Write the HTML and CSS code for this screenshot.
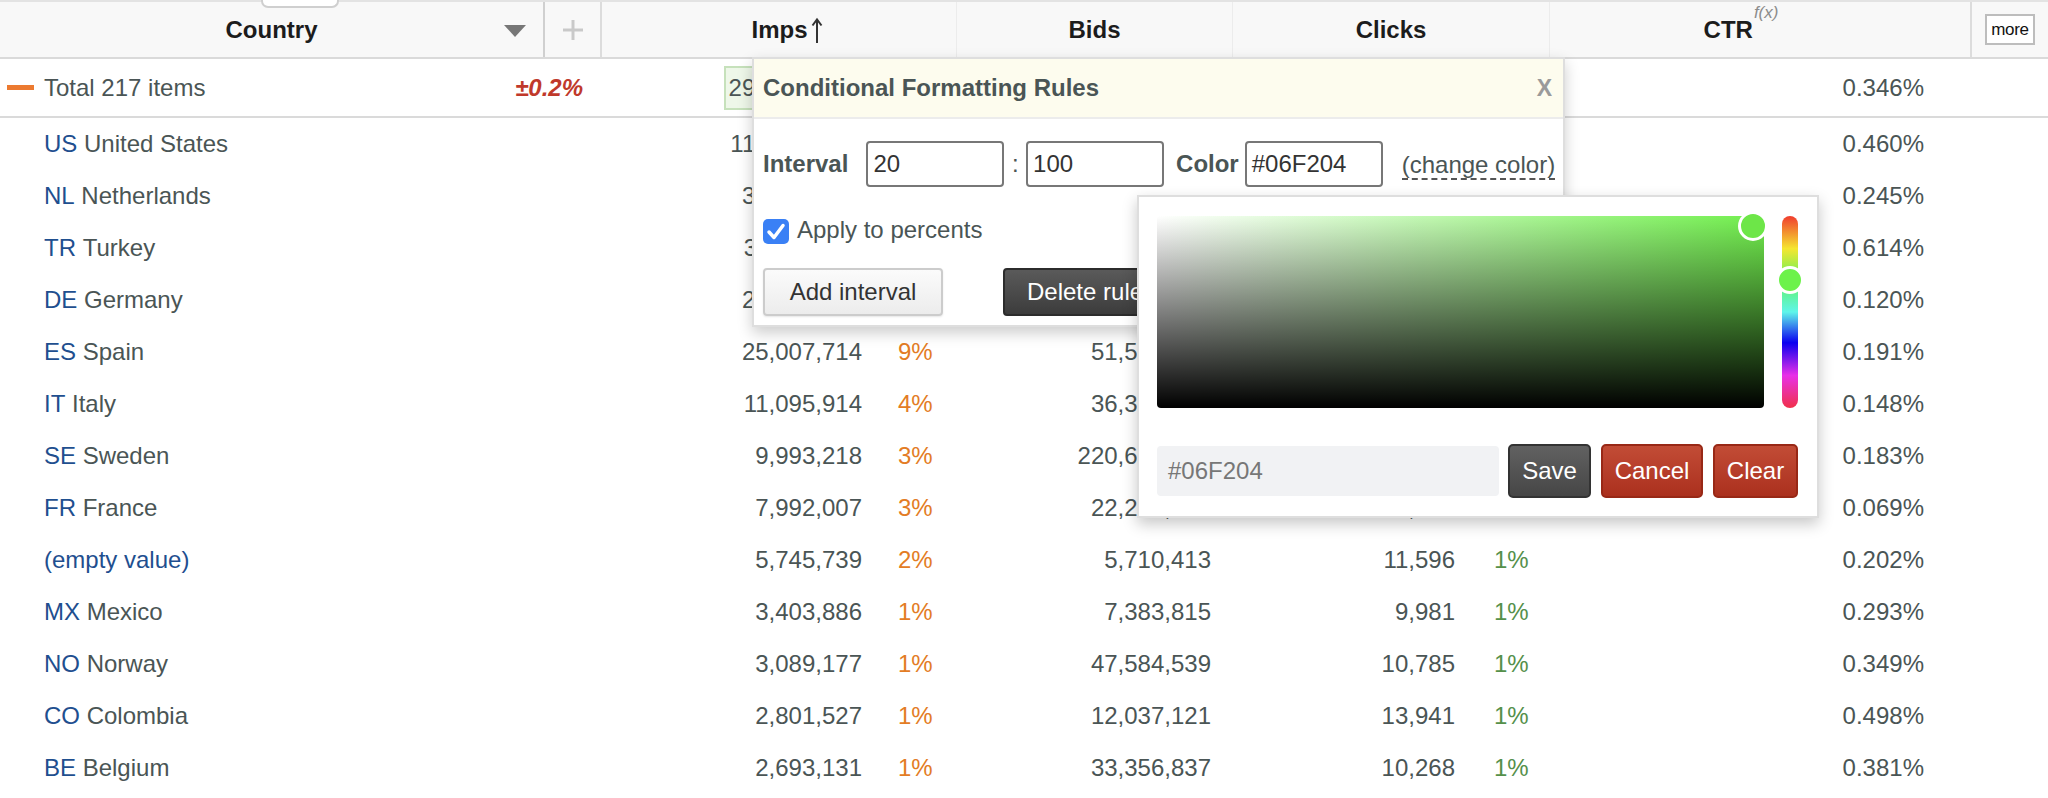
FILE: index.html
```html
<!DOCTYPE html>
<html>
<head>
<meta charset="utf-8">
<title>Report</title>
<link rel="stylesheet" href="styles.css">
</head>
<body>
<div class="tab"></div>
<div class="grid">
  <div class="hrow">
    <div class="hc hc-country"><span></span><span>Country</span><span class="tri"></span></div>
    <div class="hc hc-plus"><svg width="22" height="22" viewBox="0 0 22 22"><path d="M11 1V21M1 11H21" stroke="#c9c9c9" stroke-width="3" fill="none"/></svg></div>
    <div class="hc hc-imps">Imps<svg class="arrow" width="12" height="27" viewBox="0 0 12 27"><path d="M6 3V26M1.5 8.5L6 2.5L10.5 8.5" stroke="#333" stroke-width="2" fill="none"/></svg></div>
    <div class="hc">Bids</div>
    <div class="hc">Clicks</div>
    <div class="hc hc-ctr">CTR<span class="fx">f(x)</span></div>
    <div class="hc hc-more"><span class="more">more</span></div>
  </div>

  <div class="row total">
    <div class="c-country"><span class="dash"></span>Total 217 items<span class="dev">±0.2%</span></div>
    <div class="c-imps"><span class="num"><span class="box">291,764,355</span></span></div>
    <div class="c-bids">1,046,385,442</div>
    <div class="c-clicks"><span class="num">1,009,817</span></div>
    <div class="c-ctr">0.346%</div>
    <div></div>
  </div>

  <div class="row">
    <div class="c-country"><span class="code">US</span>&nbsp;United States</div>
    <div class="c-imps"><span class="num">118,437,205</span><span class="pct orange">41%</span></div>
    <div class="c-bids">403,559,218</div>
    <div class="c-clicks"><span class="num">544,812</span><span class="pct green">54%</span></div>
    <div class="c-ctr">0.460%</div>
    <div></div>
  </div>
  <div class="row">
    <div class="c-country"><span class="code">NL</span>&nbsp;Netherlands</div>
    <div class="c-imps"><span class="num">35,912,604</span><span class="pct orange">12%</span></div>
    <div class="c-bids">97,305,441</div>
    <div class="c-clicks"><span class="num">87,984</span><span class="pct green">9%</span></div>
    <div class="c-ctr">0.245%</div>
    <div></div>
  </div>
  <div class="row">
    <div class="c-country"><span class="code">TR</span>&nbsp;Turkey</div>
    <div class="c-imps"><span class="num">33,480,119</span><span class="pct orange">11%</span></div>
    <div class="c-bids">58,210,667</div>
    <div class="c-clicks"><span class="num">205,568</span><span class="pct green">20%</span></div>
    <div class="c-ctr">0.614%</div>
    <div></div>
  </div>
  <div class="row">
    <div class="c-country"><span class="code">DE</span>&nbsp;Germany</div>
    <div class="c-imps"><span class="num">28,764,032</span><span class="pct orange">10%</span></div>
    <div class="c-bids">71,029,385</div>
    <div class="c-clicks"><span class="num">34,517</span><span class="pct green">3%</span></div>
    <div class="c-ctr">0.120%</div>
    <div></div>
  </div>
  <div class="row">
    <div class="c-country"><span class="code">ES</span>&nbsp;Spain</div>
    <div class="c-imps"><span class="num">25,007,714</span><span class="pct orange">9%</span></div>
    <div class="c-bids">51,528,406</div>
    <div class="c-clicks"><span class="num">47,765</span><span class="pct green">5%</span></div>
    <div class="c-ctr">0.191%</div>
    <div></div>
  </div>
  <div class="row">
    <div class="c-country"><span class="code">IT</span>&nbsp;Italy</div>
    <div class="c-imps"><span class="num">11,095,914</span><span class="pct orange">4%</span></div>
    <div class="c-bids">36,347,918</div>
    <div class="c-clicks"><span class="num">16,422</span><span class="pct green">2%</span></div>
    <div class="c-ctr">0.148%</div>
    <div></div>
  </div>
  <div class="row">
    <div class="c-country"><span class="code">SE</span>&nbsp;Sweden</div>
    <div class="c-imps"><span class="num">9,993,218</span><span class="pct orange">3%</span></div>
    <div class="c-bids">220,641,073</div>
    <div class="c-clicks"><span class="num">18,288</span><span class="pct green">2%</span></div>
    <div class="c-ctr">0.183%</div>
    <div></div>
  </div>
  <div class="row">
    <div class="c-country"><span class="code">FR</span>&nbsp;France</div>
    <div class="c-imps"><span class="num">7,992,007</span><span class="pct orange">3%</span></div>
    <div class="c-bids">22,219,654</div>
    <div class="c-clicks"><span class="num">5,515</span><span class="pct green">1%</span></div>
    <div class="c-ctr">0.069%</div>
    <div></div>
  </div>
  <div class="row">
    <div class="c-country"><span class="code">(empty value)</span></div>
    <div class="c-imps"><span class="num">5,745,739</span><span class="pct orange">2%</span></div>
    <div class="c-bids">5,710,413</div>
    <div class="c-clicks"><span class="num">11,596</span><span class="pct green">1%</span></div>
    <div class="c-ctr">0.202%</div>
    <div></div>
  </div>
  <div class="row">
    <div class="c-country"><span class="code">MX</span>&nbsp;Mexico</div>
    <div class="c-imps"><span class="num">3,403,886</span><span class="pct orange">1%</span></div>
    <div class="c-bids">7,383,815</div>
    <div class="c-clicks"><span class="num">9,981</span><span class="pct green">1%</span></div>
    <div class="c-ctr">0.293%</div>
    <div></div>
  </div>
  <div class="row">
    <div class="c-country"><span class="code">NO</span>&nbsp;Norway</div>
    <div class="c-imps"><span class="num">3,089,177</span><span class="pct orange">1%</span></div>
    <div class="c-bids">47,584,539</div>
    <div class="c-clicks"><span class="num">10,785</span><span class="pct green">1%</span></div>
    <div class="c-ctr">0.349%</div>
    <div></div>
  </div>
  <div class="row">
    <div class="c-country"><span class="code">CO</span>&nbsp;Colombia</div>
    <div class="c-imps"><span class="num">2,801,527</span><span class="pct orange">1%</span></div>
    <div class="c-bids">12,037,121</div>
    <div class="c-clicks"><span class="num">13,941</span><span class="pct green">1%</span></div>
    <div class="c-ctr">0.498%</div>
    <div></div>
  </div>
  <div class="row">
    <div class="c-country"><span class="code">BE</span>&nbsp;Belgium</div>
    <div class="c-imps"><span class="num">2,693,131</span><span class="pct orange">1%</span></div>
    <div class="c-bids">33,356,837</div>
    <div class="c-clicks"><span class="num">10,268</span><span class="pct green">1%</span></div>
    <div class="c-ctr">0.381%</div>
    <div></div>
  </div>
</div>

<div class="cf">
  <div class="cf-head">Conditional Formatting Rules<span class="close">X</span></div>
  <div class="cf-body">
    <div class="cf-line">
      <span class="lbl lbl-interval">Interval</span>
      <span class="inp">20</span>
      <span class="colon">:</span>
      <span class="inp">100</span>
      <span class="lbl lbl-color">Color</span>
      <span class="inp">#06F204</span>
      <span class="change">(change color)</span>
    </div>
    <div class="cf-check">
      <span class="cb"><svg width="26" height="25" viewBox="0 0 26 25"><path d="M6 13L11 18.5L20 6.5" stroke="#fff" stroke-width="3.5" fill="none" stroke-linecap="round" stroke-linejoin="round"/></svg></span>
      <span>Apply to percents</span>
    </div>
    <div class="cf-btns">
      <span class="btn btn-light">Add interval</span>
      <span class="btn btn-dark">Delete rule</span>
    </div>
  </div>
</div>

<div class="picker">
  <div class="pk-top">
    <div class="sat"><span class="sat-h"></span></div>
    <div class="hue"><span class="hue-h"></span></div>
  </div>
  <div class="pk-bottom">
    <span class="hex">#06F204</span>
    <span class="pbtn pbtn-save">Save</span>
    <span class="pbtn pbtn-red pbtn-cancel">Cancel</span>
    <span class="pbtn pbtn-red pbtn-clear">Clear</span>
  </div>
</div>
</body>
</html>
```

FILE: styles.css
```css
* { box-sizing: border-box; }
html, body { margin: 0; padding: 0; }
body {
  width: 2048px;
  height: 798px;
  overflow: hidden;
  position: relative;
  background: #fff;
  font-family: "Liberation Sans", Arial, sans-serif;
  font-size: 24px;
  color: #4a5555;
}

.tab {
  position: absolute;
  left: 261px;
  top: 0;
  width: 78px;
  height: 8px;
  background: #fff;
  border: 2px solid #cfcfcf;
  border-top: none;
  border-radius: 0 0 7px 7px;
  z-index: 2;
}

.grid { display: flex; flex-direction: column; }

.hrow, .row {
  display: grid;
  grid-template-columns: 543px 57px 356px 276px 317px 421px 78px;
}

.hrow {
  height: 59px;
  background: #f8f8f8;
  border-top: 2px solid #e3e3e3;
  border-bottom: 2px solid #dadada;
  color: #1c1c1c;
  font-weight: bold;
}
.hc {
  display: flex;
  align-items: center;
  justify-content: center;
  border-left: 1px solid #ececec;
}
.hc-country {
  border-left: none;
  display: grid;
  grid-template-columns: 1fr auto 1fr;
  align-items: center;
}
.tri {
  justify-self: end;
  margin-right: 17px;
  margin-top: 2px;
  width: 0;
  height: 0;
  border-left: 11.5px solid transparent;
  border-right: 11.5px solid transparent;
  border-top: 12px solid #777;
}
.hc-plus { border-left: 2px solid #d0d0d0; }
.hc-imps { border-left: 2px solid #dcdcdc; padding-left: 16px; }
.arrow { margin-left: 3px; margin-top: 2px; }
.hc-ctr { padding-right: 38px; }
.fx {
  font-weight: normal;
  font-style: italic;
  font-size: 17px;
  color: #8c8c8c;
  align-self: flex-start;
  margin-top: 1px;
  margin-left: 1px;
}
.hc-more { border-left: 2px solid #dcdcdc; }
.more {
  display: flex;
  align-items: center;
  height: 31px;
  padding: 0 4px;
  border: 2px solid #bdbdbd;
  background: #fff;
  font-weight: normal;
  font-size: 17px;
  color: #111;
  letter-spacing: -0.3px;
}

.row { height: 52px; align-items: center; }
.total { height: 59px; border-bottom: 2px solid #dadada; }

.c-country {
  grid-column: span 2;
  padding-left: 44px;
  display: flex;
  align-items: center;
  white-space: nowrap;
}
.total .c-country { padding-left: 7px; padding-right: 17px; }
.dash {
  width: 27px;
  height: 5px;
  background: #ec7a30;
  margin-right: 10px;
}
.dev {
  margin-left: auto;
  color: #c0392b;
  font-weight: bold;
  font-style: italic;
}
.code { color: #1f4f8f; }

.c-imps, .c-clicks { display: flex; align-items: center; white-space: nowrap; }
.num { width: 262px; text-align: right; flex: none; }
.c-clicks .num { width: 223px; }
.pct { margin-left: 36px; }
.c-clicks .pct { margin-left: 39px; }
.orange { color: #e37c24; }
.green { color: #55904a; }
.box {
  display: inline-block;
  padding: 6px 4px 6px 3px;
  margin-right: -6px;
  background: #eef7e9;
  border: 2px solid #c6e1bb;
}
.c-bids { text-align: right; padding-right: 21px; white-space: nowrap; }
.c-ctr { text-align: right; padding-right: 46px; }

/* Conditional formatting dialog */
.cf {
  position: absolute;
  left: 752px;
  top: 57px;
  width: 813px;
  background: #fff;
  border: 2px solid #dedede;
  box-shadow: 0 6px 14px rgba(0, 0, 0, 0.2);
  z-index: 3;
}
.cf-head {
  height: 60px;
  display: flex;
  align-items: center;
  padding: 0 11px 0 9px;
  background: #fdfcee;
  border-bottom: 2px solid #ececec;
  font-weight: bold;
  color: #4a5555;
}
.close {
  margin-left: auto;
  font-size: 23px;
  color: #9a9a9a;
  font-weight: bold;
}
.cf-body {
  padding: 22px 9px 9px;
  display: flex;
  flex-direction: column;
}
.cf-line { display: flex; align-items: center; height: 46px; white-space: nowrap; }
.cf-line > * { flex: none; }
.lbl { font-weight: bold; }
.lbl-interval { margin-right: 18px; }
.lbl-color { margin-left: 12px; margin-right: 6px; }
.inp {
  width: 138px;
  height: 46px;
  border: 2px solid #777;
  border-radius: 4px;
  padding-left: 5px;
  display: flex;
  align-items: center;
  color: #333;
}
.colon { margin: 0 7.5px; }
.change {
  margin-left: 19px;
  border-bottom: 2px dashed #555;
  line-height: 26px;
  margin-top: 4px;
}
.cf-check {
  display: flex;
  align-items: center;
  height: 30px;
  margin-top: 28px;
}
.cb {
  width: 26px;
  height: 25px;
  border-radius: 5px;
  background: #3a80f5;
  margin-right: 8px;
  margin-top: 3px;
  display: flex;
}
.cf-btns {
  display: flex;
  gap: 60px;
  margin-top: 23px;
}
.btn {
  height: 48px;
  display: flex;
  align-items: center;
  padding: 0 22px;
  border-radius: 4px;
  border: 2px solid #ccc;
  white-space: nowrap;
}
.btn-light {
  width: 180px;
  justify-content: center;
  background: linear-gradient(#fbfbfb, #ececec);
  color: #333;
  box-shadow: 0 1px 2px rgba(0, 0, 0, 0.1);
}
.btn-dark {
  background: linear-gradient(#5a5a5a, #3c3c3c);
  border-color: #2c2c2c;
  color: #fff;
}

/* Color picker */
.picker {
  position: absolute;
  left: 1137px;
  top: 195px;
  width: 682px;
  height: 323px;
  background: #fff;
  border: 2px solid #dedede;
  box-shadow: 0 6px 14px rgba(0, 0, 0, 0.22);
  padding: 19px 19px 18px 18px;
  display: flex;
  flex-direction: column;
  z-index: 4;
}
.pk-top { display: flex; gap: 18px; }
.sat {
  position: relative;
  width: 607px;
  height: 192px;
  border-radius: 4px;
  background:
    linear-gradient(to top, #000, rgba(0, 0, 0, 0)),
    linear-gradient(to right, #fff, #72f04e);
}
.sat-h {
  position: absolute;
  left: 581px;
  top: -5px;
  width: 30px;
  height: 30px;
  border-radius: 50%;
  border: 3px solid #fff;
  background: #6de648;
}
.hue {
  position: relative;
  width: 16px;
  height: 192px;
  border-radius: 8px;
  background: linear-gradient(to bottom, #f03c2e 0%, #f5e630 17%, #62f25a 33%, #5ef5ea 50%, #0a00f0 66%, #e830e8 83%, #f0304a 100%);
}
.hue-h {
  position: absolute;
  left: -6px;
  top: 50px;
  width: 28px;
  height: 28px;
  border-radius: 50%;
  border: 3px solid #fff;
  background: #6cf24a;
}
.pk-bottom {
  display: flex;
  align-items: center;
  margin-top: 36px;
  height: 54px;
}
.hex {
  width: 342px;
  height: 50px;
  background: #f1f2f4;
  border-radius: 4px;
  padding-left: 11px;
  display: flex;
  align-items: center;
  color: #777;
}
.pbtn {
  height: 54px;
  display: flex;
  align-items: center;
  justify-content: center;
  border-radius: 5px;
  color: #fff;
  border: 2px solid #333;
  margin-left: 10px;
}
.pbtn-save {
  width: 83px;
  margin-left: 9px;
  background: linear-gradient(#616161, #464646);
}
.pbtn-red {
  background: linear-gradient(#c24c36, #ab301e);
  border-color: #982816;
}
.pbtn-cancel { width: 102px; }
.pbtn-clear { width: 85px; }
```
